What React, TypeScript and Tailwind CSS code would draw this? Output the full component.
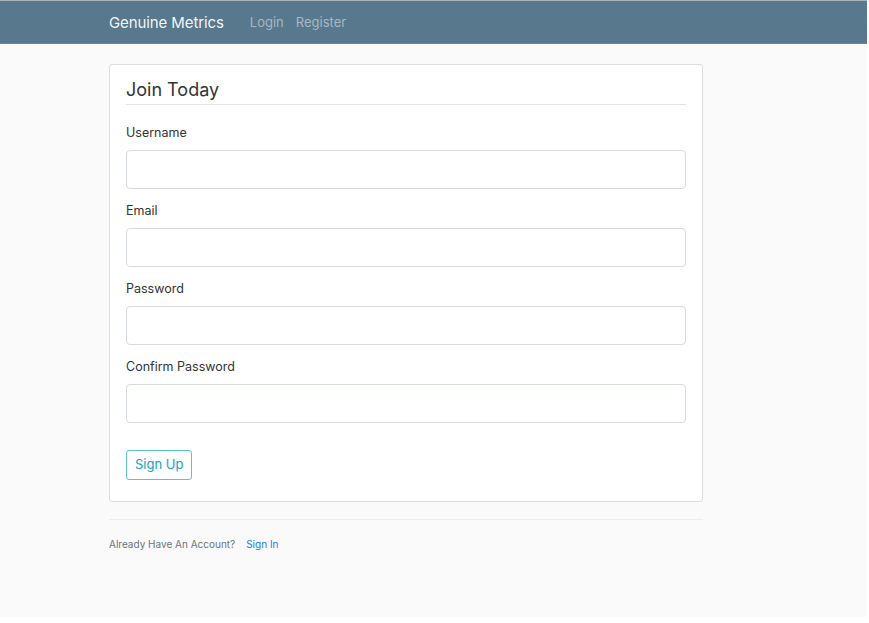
const fields = ['Username', 'Email', 'Password', 'Confirm Password'];

export default function App() {
  return (
    <div
      className="w-[869px] h-[623px] bg-white overflow-hidden"
      style={{ fontFamily: 'Inter, "Noto Sans", sans-serif' }}
    >
      <div className="w-[867px] h-[617px] bg-[#fafafa] flex flex-col">
        <div className="h-px bg-[#a6b4be]" />
        <nav className="h-[43px] bg-[#58788e] border-b border-[#6d8799] flex items-center pl-[109px] pt-[2px]">
          <span className="text-[15px] text-white/95 tracking-[-0.1px]">Genuine Metrics</span>
          <div className="flex items-center gap-[12px] ml-[26px] text-[13px] text-[#a7b7c3]">
            <span>Login</span>
            <span>Register</span>
          </div>
        </nav>

        <main className="pl-[109px] pt-[20px] w-[703px]">
          <div className="bg-white border border-[#dedede] rounded-[3px] px-[16px] pt-[12px] pb-[21px]">
            <h1 className="text-[18px] text-[#333] leading-[26px] pb-[1px] border-b border-[#e3e3e3]">
              Join Today
            </h1>
            <div className="mt-[19px] flex flex-col gap-[13px]">
              {fields.map((f) => (
                <div key={f}>
                  <label className="block text-[12.5px] text-[#333] leading-[18px] mb-[8px]">{f}</label>
                  <input
                    type={f.includes('Password') ? 'password' : 'text'}
                    className="block w-full h-[39px] bg-white border border-[#d6dbe0] rounded-[4px] outline-none"
                  />
                </div>
              ))}
            </div>
            <button className="mt-[27px] h-[30px] px-[8px] border border-[#5cc3d3] rounded-[3px] text-[13px] text-[#17a2b8] bg-white">
              Sign Up
            </button>
          </div>

          <div className="mt-[17px] border-t border-[#eceeee] pt-[17px] text-[10px] leading-[14px]">
            <span className="text-[#6c757d]">Already Have An Account?</span>
            <span className="ml-[11px] text-[#1a7cf0]">Sign In</span>
          </div>
        </main>
      </div>
    </div>
  );
}
